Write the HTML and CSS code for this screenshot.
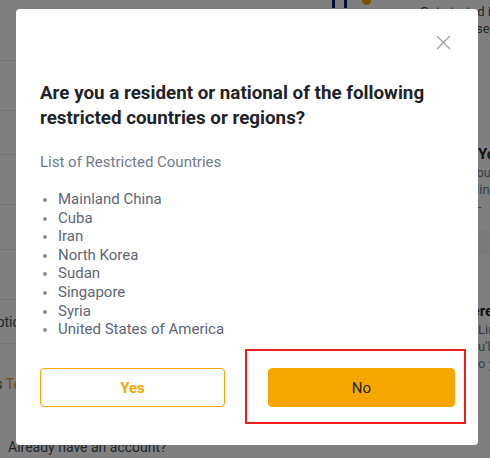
FILE: index.html
```html
<!DOCTYPE html>
<html lang="en">
<head>
<meta charset="utf-8">
<title>Restricted countries</title>
<link rel="stylesheet" href="styles.css">
</head>
<body>
<div class="page">
  <div class="topbar">
    <div class="logo"><span class="bar"></span><span class="bar"></span><span class="dot"></span></div>
    <div class="topright">
      <div class="tr-line">Get started in minutes</div>
      <div class="tr-line">Sign up, use the <span class="accent">code</span></div>
    </div>
  </div>
  <div class="columns">
    <div class="leftcol">
      <div class="row r1"></div>
      <div class="row r2"></div>
      <div class="row r3"></div>
      <div class="row r4"></div>
      <div class="row r5"></div>
      <div class="row r6"><span class="rowtext">Options</span></div>
      <div class="row r7"><span class="rowtext">I agree to Binance's <span class="accent">Terms</span></span></div>
      <div class="already">Already have an account?</div>
    </div>
    <div class="rightcol">
      <div class="rc-block">
        <div class="rc-title">Your</div>
        <div class="rc-text shift1">Your</div>
        <div class="rc-text shift2">Online</div>
        <div class="rc-text">-</div>
      </div>
      <div class="rc-sep"></div>
      <div class="rc-block second">
        <div class="rc-title shift3">Here</div>
        <div class="rc-text">Limit</div>
        <div class="rc-text">u'll</div>
        <div class="rc-text">o you</div>
      </div>
    </div>
  </div>
</div>

<div class="overlay">
  <div class="modal">
    <div class="modal-head">
      <button class="close" aria-label="Close">
        <svg width="15" height="15" viewBox="0 0 15 15"><path d="M1 1 L14 14 M14 1 L1 14" stroke="#a3a3a3" stroke-width="1.4" fill="none"/></svg>
      </button>
    </div>
    <h2 class="title">Are you a resident or national of the following restricted countries or regions?</h2>
    <p class="subtitle">List of Restricted Countries</p>
    <ul class="countries">
      <li>Mainland China</li>
      <li>Cuba</li>
      <li>Iran</li>
      <li>North Korea</li>
      <li>Sudan</li>
      <li>Singapore</li>
      <li>Syria</li>
      <li>United States of America</li>
    </ul>
    <div class="actions">
      <button class="btn btn-yes">Yes</button>
      <button class="btn btn-no">No</button>
    </div>
    <div class="highlight"></div>
  </div>
</div>
</body>
</html>
```
FILE: styles.css
```css
* { box-sizing: border-box; }
html, body { margin: 0; padding: 0; }
body {
  width: 490px;
  height: 458px;
  overflow: hidden;
  font-family: Roboto, "Liberation Sans", sans-serif;
  background: #ffffff;
  color: #1e2329;
}

/* underlying page */
.page { width: 490px; height: 458px; overflow: hidden; }
.topbar { display: flex; height: 60px; padding-left: 332px; }
.logo { display: flex; gap: 9px; align-items: flex-start; height: 20px; margin-top: -10px; }
.bar { width: 3px; height: 18px; background: #0b1d6b; }
.dot { width: 9px; height: 9px; border-radius: 50%; background: #f0a500; margin-top: 6px; margin-left: 6px; }
.topright { margin-left: 49px; padding-top: 4px; font-size: 13px; color: #474d57; white-space: nowrap; }
.tr-line { height: 17px; }
.accent { color: #e8a200; }

.columns { display: flex; }
.leftcol { width: 300px; flex: none; }
.row { height: 48px; border-top: 1px solid #e6e6e6; display: flex; align-items: center; font-size: 14px; color: #474d57; white-space: nowrap; }
.r1 { height: 50px; }
.r2 { height: 44px; }
.r3 { height: 50px; }
.r4 { height: 45px; }
.r5 { height: 50px; }
.r6 { height: 44px; }
.r7 { height: 90px; }
.rowtext { margin-left: -115px; }
.r6 .rowtext { margin-left: -13px; }
.r7 .rowtext { margin-left: -118px; margin-top: -10px; }
.already { font-size: 14px; color: #474d57; padding-left: 8px; margin-top: 6px; }

.rightcol { width: 190px; padding-left: 178px; flex: none; padding-top: 85px; white-space: nowrap; }
.rc-title { font-size: 15px; font-weight: 700; color: #1e2329; height: 20px; }
.rc-text { font-size: 13px; color: #707a8a; height: 17px; }
.shift1 { margin-left: -9px; }
.shift2 { margin-left: -18px; }
.shift3 { margin-left: -17px; }
.rc-sep { height: 24px; margin: 14px 0 0; background: #f5f5f5; }
.second { margin-top: 48px; }

/* overlay */
.overlay {
  position: fixed;
  inset: 0;
  background: rgba(0, 0, 0, 0.5);
  padding: 9px 12px 13px 16px;
}
.modal {
  position: relative;
  width: 462px;
  height: 436px;
  background: #ffffff;
  border-radius: 4px;
  padding: 0 24px 38px 24px;
}
.modal-head {
  height: 71.5px;
  display: flex;
  justify-content: flex-end;
  align-items: flex-start;
  padding-top: 26px;
}
.close {
  border: 0;
  background: none;
  padding: 0;
  width: 15px;
  height: 15px;
  margin-right: 3px;
  cursor: pointer;
  display: block;
}
.close svg { display: block; }
.title {
  margin: 0;
  font-size: 18.8px;
  line-height: 25px;
  font-weight: 700;
  color: #1e2329;
}
.subtitle {
  margin: 21px 0 0;
  font-size: 15px;
  line-height: 20px;
  color: #707a8a;
}
.countries {
  margin: 18.5px 0 0;
  padding-left: 18px;
  font-size: 15px;
  line-height: 18.6px;
  color: #5e6673;
}
.countries li::marker { color: #8a8f98; font-size: 13px; }
.actions {
  margin-top: 29.5px;
  display: grid;
  grid-template-columns: 185px 187px;
  column-gap: 43px;
}
.btn {
  height: 39px;
  border-radius: 4px;
  font-family: inherit;
  font-size: 15px;
  cursor: pointer;
}
.btn-yes {
  background: #ffffff;
  border: 1px solid #f7a600;
  color: #f7a600;
  font-weight: 700;
}
.btn-no {
  background: #f7a600;
  border: 1px solid #f7a600;
  color: #1e2329;
  font-weight: 400;
}
.highlight {
  position: absolute;
  left: 229px;
  top: 340px;
  width: 221px;
  height: 75px;
  border: 2px solid #f31c1c;
  pointer-events: none;
}
```
